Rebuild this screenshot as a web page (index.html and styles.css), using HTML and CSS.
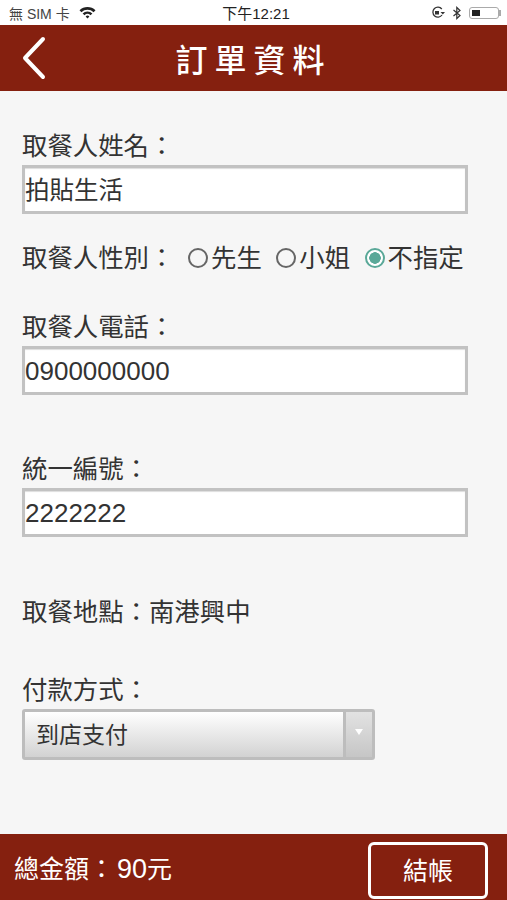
FILE: index.html
```html
<!DOCTYPE html>
<html lang="zh-TW">
<head>
    <meta charset="UTF-8">
    <meta name="viewport" content="width=device-width, initial-scale=1.0">
    <title>訂單資料</title>
    <link rel="stylesheet" href="styles.css">
</head>
<body>
    <!-- 狀態列 -->
    <div class="status-bar">
        <div class="status-left">
            <span>無 SIM 卡</span>
            <svg class="wifi" width="17" height="13" viewBox="0 0 17 13">
                <path d="M0.5 4.2 A11.5 11.5 0 0 1 16.5 4.2 L14.6 6.2 A8.8 8.8 0 0 0 2.4 6.2 Z" fill="#222"/>
                <path d="M3.6 7.4 A7 7 0 0 1 13.4 7.4 L11.5 9.3 A4.3 4.3 0 0 0 5.5 9.3 Z" fill="#222"/>
                <path d="M6.6 10.4 A2.8 2.8 0 0 1 10.4 10.4 L8.5 12.6 Z" fill="#222"/>
            </svg>
        </div>
        <div class="status-time">下午12:21</div>
        <div class="status-right">
            <svg width="14" height="13" viewBox="0 0 14 13">
                <path d="M10.8 3 A5 5 0 1 0 11 9" fill="none" stroke="#333" stroke-width="1.3"/>
                <rect x="4" y="5" width="4" height="3.5" fill="#333"/>
                <path d="M9.5 6h4.5l-2.2 2.6z" fill="#333"/>
            </svg>
            <svg width="10" height="14" viewBox="0 0 10 14">
                <path d="M1.5 4l6.5 5.5-3.2 3V1.5L8 4.5 1.5 10" fill="none" stroke="#333" stroke-width="1.2"/>
            </svg>
            <div class="battery"><div class="battery-nivel"></div></div>
        </div>
    </div>

    <!-- 標題列 -->
    <div class="barra-superior">
        <svg class="btn-volver" width="26" height="44" viewBox="0 0 26 44">
            <path d="M22 3 L4 22 L22 41" fill="none" stroke="#fff" stroke-width="4" stroke-linecap="round" stroke-linejoin="round"/>
        </svg>
        <h1>訂單資料</h1>
    </div>

    <!-- 表單 -->
    <div class="contenido">
        <div class="grupo grupo-nombre">
            <div class="etiqueta">取餐人姓名：</div>
            <div class="campo">拍貼生活</div>
        </div>

        <div class="fila-genero">
            <span class="etiqueta etiqueta-genero">取餐人性別：</span>
            <span class="opcion"><span class="radio"></span>先生</span>
            <span class="opcion"><span class="radio"></span>小姐</span>
            <span class="opcion"><span class="radio activo"></span>不指定</span>
        </div>

        <div class="grupo grupo-telefono">
            <div class="etiqueta">取餐人電話：</div>
            <div class="campo campo-numero">0900000000</div>
        </div>

        <div class="grupo grupo-numero">
            <div class="etiqueta">統一編號：</div>
            <div class="campo campo-numero">2222222</div>
        </div>

        <div class="etiqueta lugar">取餐地點：南港興中</div>

        <div class="grupo grupo-pago">
            <div class="etiqueta">付款方式：</div>
            <div class="selector">
                <div class="selector-texto">到店支付</div>
                <div class="selector-flecha"></div>
            </div>
        </div>
    </div>

    <!-- 底部 -->
    <div class="barra-inferior">
        <div class="total">總金額：<span class="total-monto">90</span>元</div>
        <button class="btn-pagar">結帳</button>
    </div>
</body>
</html>
```

FILE: styles.css
```css
/* GENERAL */
html, body {
    margin: 0;
    height: 100%;
}

body {
    display: flex;
    flex-direction: column;
    height: 900px;
    overflow: hidden;
    background-color: #f6f6f6;
    color: #333;
    font-family: "Liberation Sans", "Noto Sans CJK TC", sans-serif;
}

/* STATUS BAR */
.status-bar {
    display: grid;
    grid-template-columns: 1fr auto 1fr;
    align-items: center;
    height: 25px;
    padding: 0 6px 0 9px;
    background-color: #fff;
    color: #222;
    font-size: 14px;
}

.status-left {
    display: flex;
    align-items: center;
    gap: 9px;
    color: #444;
}

.status-time {
    margin-left: 2px;
    font-size: 15px;
}

.status-right {
    display: flex;
    justify-content: flex-end;
    align-items: center;
    gap: 7px;
}

.battery {
    position: relative;
    width: 30px;
    height: 12px;
    margin-right: 2px;
    padding: 2px;
    box-sizing: border-box;
    border: 1px solid #aaa;
    border-radius: 3px;
}

.battery::after {
    content: "";
    position: absolute;
    top: 2px;
    right: -3px;
    width: 2px;
    height: 6px;
    background-color: #aaa;
}

.battery-nivel {
    width: 8px;
    height: 100%;
    background-color: #222;
}

/* TITLE BAR */
.barra-superior {
    position: relative;
    display: flex;
    justify-content: center;
    align-items: center;
    height: 66px;
    background-color: #85200f;
    color: #fff;
}

.barra-superior h1 {
    margin: 0;
    font-size: 32px;
    font-weight: 500;
    letter-spacing: 7px;
}

.btn-volver {
    position: absolute;
    left: 21px;
    top: 11px;
}

/* FORM */
.contenido {
    flex: 1;
    padding: 0 22px;
}

.etiqueta {
    font-size: 25.4px;
    line-height: 36px;
}

.grupo-nombre {
    margin-top: 37px;
}

.grupo-telefono {
    margin-top: 33px;
}

.grupo-numero {
    margin-top: 56px;
}

.campo {
    width: 446px;
    height: 49px;
    margin-top: 1px;
    box-sizing: border-box;
    border: 3px solid #c2c2c2;
    box-shadow: inset 0 1px 1px #ddd;
    background-color: #fff;
    font-size: 24.5px;
    line-height: 45px;
}

.campo-numero {
    font-size: 26px;
}

.fila-genero {
    display: flex;
    align-items: center;
    margin-top: 26px;
    font-size: 25.4px;
    line-height: 36px;
}

.etiqueta-genero {
    width: 166px;
}

.opcion {
    display: flex;
    align-items: center;
    margin-right: 14.5px;
}

.radio {
    width: 20px;
    height: 20px;
    margin-right: 3px;
    box-sizing: border-box;
    border: 2.5px solid #666;
    border-radius: 50%;
}

.radio.activo {
    border-color: #5aa898;
    background: radial-gradient(circle, #5aa898 0 5.5px, #fff 6px);
}

.lugar {
    margin-top: 57px;
}

.grupo-pago {
    margin-top: 42px;
}

.selector {
    display: flex;
    width: 353px;
    height: 51px;
    margin-top: 1px;
    box-sizing: border-box;
    border: 3px solid #bdbdbd;
    border-radius: 3px;
}

.selector-texto {
    flex: 1;
    padding-left: 11px;
    background: linear-gradient(#fff, #d2d2d2);
    font-size: 23px;
    line-height: 47px;
}

.selector-flecha {
    position: relative;
    width: 26px;
    border-left: 3px solid #bdbdbd;
    background: linear-gradient(#e2e2e2, #c6c6c6);
}

.selector-flecha::after {
    content: "";
    position: absolute;
    top: 17px;
    left: 9px;
    border-top: 6px solid #fff;
    border-left: 4px solid transparent;
    border-right: 4px solid transparent;
}

/* BOTTOM BAR */
.barra-inferior {
    display: flex;
    justify-content: space-between;
    align-items: center;
    height: 66px;
    padding: 0 19px 0 14px;
    box-sizing: border-box;
    background-color: #85200f;
    color: #fff;
}

.total {
    font-size: 25px;
}

.total-monto {
    margin-left: 3px;
    font-size: 27px;
}

.btn-pagar {
    width: 120px;
    height: 57px;
    margin-top: 7px;
    padding: 0 0 3px;
    border: 3px solid #fff;
    border-radius: 6px;
    background: none;
    color: #fff;
    font-family: inherit;
    font-size: 25px;
}
```
